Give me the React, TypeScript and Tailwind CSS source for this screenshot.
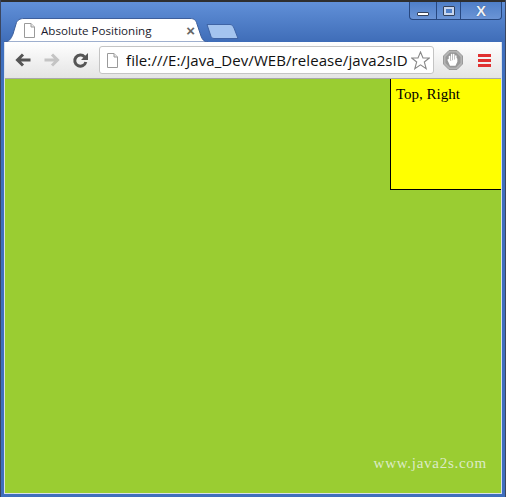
const PageIcon = ({ className }: { className?: string }) => (
  <svg className={className} width="13" height="15" viewBox="0 0 13 15" fill="none">
    <path d="M1.5 0.5H8L11.5 4V14.5H1.5Z" fill="#fff" stroke="#9a9a9a" />
    <path d="M8 0.5V4H11.5" fill="#e8e8e8" stroke="#9a9a9a" />
  </svg>
);

const NavArrow = ({ color, flip }: { color: string; flip?: boolean }) => (
  <svg width="16" height="14" viewBox="0 0 16 14" fill="none" className={flip ? "-scale-x-100" : ""}>
    <path d="M15.5 7H3M8 1.5L2.5 7L8 12.5" stroke={color} strokeWidth="3" />
  </svg>
);

const ReloadIcon = () => (
  <svg width="17" height="17" viewBox="0 0 17 17" fill="none">
    <path d="M12.6 5A5.6 5.6 0 1 0 13.8 10" stroke="#555" strokeWidth="3" />
    <path d="M16 1V8H9Z" fill="#555" />
  </svg>
);

const StopIcon = () => (
  <svg width="20" height="20" viewBox="0 0 20 20">
    <path d="M6 0.5H14L19.5 6V14L14 19.5H6L0.5 14V6Z" fill="#b4b4b4" stroke="#9a9a9a" />
    <path d="M2.5 7L7 2.5H13L17.5 7V13L13 17.5H7L2.5 13Z" fill="#989898" />
    <path d="M6.5 10.5V6.5M8.6 10V4.5M10.7 10V4.5M12.8 10.5V6M6.5 11L5 9.5L7.5 15H12L13.6 11.5V9" fill="#fff" stroke="#fff" strokeWidth="1.5" strokeLinecap="round" />
  </svg>
);

const WindowControls = () => (
  <div className="flex h-[18px] w-[93px] rounded-b-[4px] border border-t-0 border-[#27477f] bg-gradient-to-b from-[#4f7fc8] to-[#6a94d6]">
    <div className="flex w-[27px] items-center justify-center border-r border-[#27477f] pt-[6px]">
      <div className="h-[4px] w-[12px] rounded-[1px] border border-[#33415c] bg-white" />
    </div>
    <div className="flex w-[24px] items-center justify-center border-r border-[#27477f]">
      <div className="h-[10px] w-[12px] rounded-[1px] border border-[#33415c] bg-[#c8d6ee] p-[2px]">
        <div className="h-full w-full bg-[#4f7fc8]" />
      </div>
    </div>
    <div className="flex flex-1 items-center justify-center font-['Liberation_Sans',sans-serif] text-[15px] font-bold leading-none text-[#eef3fb] [text-shadow:0_0_1px_#1f3358]">
      X
    </div>
  </div>
);

const Tab = () => (
  <div className="relative h-[24px] w-[204px]">
    <svg className="absolute inset-0" width="204" height="24" viewBox="0 0 204 24">
      <path d="M0 24C5 24 7 21 9 16L12 6C13 2 16 0.5 20 0.5H186C190 0.5 192 2 193 6L197 18C198 21 200 24 204 24Z" fill="#fff" stroke="#3d5f9c" />
    </svg>
    <div className="relative flex h-full items-center pl-[19px] pr-[13px] pt-[1px]">
      <PageIcon />
      <span className="ml-[5px] flex-1 font-['Open_Sans','Liberation_Sans',sans-serif] text-[11.6px] text-[#1b1b2e]">Absolute Positioning</span>
      <span className="font-['Liberation_Sans',sans-serif] text-[15px] font-bold leading-none text-[#666]">×</span>
    </div>
  </div>
);

const NewTab = () => (
  <svg width="33" height="15" viewBox="0 0 33 15" className="-ml-[2px] mt-[6px]">
    <path d="M1 0.5H24C26 0.5 27 2 28 4L32 14.5H8C6 14.5 5 13 4.5 11Z" fill="#a4c4ef" stroke="#3f64a5" />
  </svg>
);

export default function App() {
  return (
    <div className="flex h-[497px] w-[506px] flex-col overflow-hidden border-x border-[#3a4660] bg-[#3f6fbd]">
      <div className="h-[2px] bg-[#2e2e2e]" />
      {/* title bar */}
      <div className="flex h-[40px] bg-gradient-to-b from-[#6190d8] to-[#3f6db8] pl-[3px] pr-[3px]">
        <div className="flex flex-1 items-end">
          <div className="flex items-start">
            <Tab />
            <NewTab />
          </div>
        </div>
        <WindowControls />
      </div>

      <div className="flex min-h-0 flex-1 flex-col px-[3px] pb-[3px]">
        <div className="flex min-h-0 flex-1 flex-col border-x border-b border-[#d8e0ea]">
          {/* toolbar */}
          <div className="flex h-[37px] items-center border-b border-[#a8a8a8] bg-gradient-to-b from-white to-[#e4e4e4] pl-[10px] pr-[8px]">
            <NavArrow color="#555" />
            <div className="ml-[13px]">
              <NavArrow color="#c4c4c4" flip />
            </div>
            <div className="ml-[12px]">
              <ReloadIcon />
            </div>
            <div className="ml-[10px] flex h-[28px] w-[335px] items-center rounded-[3px] border border-[#c4c4c4] bg-white pl-[6px] pr-[3px]">
              <PageIcon className="shrink-0" />
              <span className="ml-[7px] w-[283px] overflow-hidden whitespace-nowrap font-['Open_Sans','Liberation_Sans',sans-serif] text-[15px] tracking-[0.08px] text-[#111]">
                file:///E:/Java_Dev/WEB/release/java2sID
              </span>
              <svg width="19" height="19" viewBox="0 0 19 19" className="ml-auto" fill="#fff" stroke="#888" strokeWidth="1.1">
                <path d="M9.5 1L12 7H18.3L13.3 11L15.2 17.6L9.5 13.8L3.8 17.6L5.7 11L0.7 7H7Z" />
              </svg>
            </div>
            <div className="ml-[9px]">
              <StopIcon />
            </div>
            <div className="ml-[15px] flex w-[13px] flex-col gap-[2px]">
              <div className="h-[3px] bg-[#e03030]" />
              <div className="h-[3px] bg-[#e03030]" />
              <div className="h-[3px] bg-[#e03030]" />
            </div>
          </div>

          {/* page */}
          <div className="flex min-h-0 flex-1 flex-col justify-between bg-[#9acd32]">
            <div className="flex justify-end">
              <div className="h-[111px] w-[111px] border-b border-l border-black bg-[#ffff00] px-[5px] py-[7px] font-['Liberation_Serif',serif] text-[15px] leading-[17px] text-black">
                Top, Right
              </div>
            </div>
            <div className="flex justify-end pb-[21px] pr-[14px] font-['Liberation_Serif',serif] text-[15px] leading-[17px] tracking-[0.73px] text-[#dcebc8]">
              www.java2s.com
            </div>
          </div>
        </div>
      </div>
    </div>
  );
}
